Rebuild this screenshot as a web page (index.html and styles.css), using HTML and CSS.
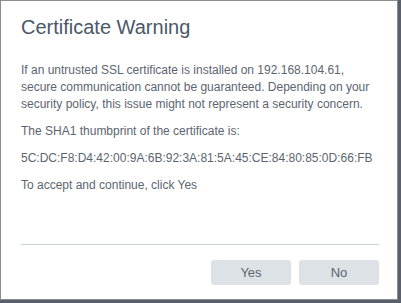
FILE: index.html
```html
<!DOCTYPE html>
<html>
<head>
<meta charset="utf-8">
<link rel="stylesheet" href="styles.css">
</head>
<body>
<div class="dialog">
  <h1 class="title">Certificate Warning</h1>
  <div class="content">
    <p class="para">If an untrusted SSL certificate is installed on 192.168.104.61, secure communication cannot be guaranteed. Depending on your security policy, this issue might not represent a security concern.</p>
    <p class="para">The SHA1 thumbprint of the certificate is:</p>
    <p class="para">5C:DC:F8:D4:42:00:9A:6B:92:3A:81:5A:45:CE:84:80:85:0D:66:FB</p>
    <p class="para">To accept and continue, click Yes</p>
  </div>
  <div class="footer">
    <div class="sep"></div>
    <div class="buttons">
      <button class="btn">Yes</button>
      <button class="btn">No</button>
    </div>
  </div>
</div>
</body>
</html>
```
FILE: styles.css
```css
html, body {
  margin: 0;
  padding: 0;
}
body {
  background: #58606b;
  width: 401px;
  height: 303px;
  overflow: hidden;
  font-family: "Liberation Sans", Arial, sans-serif;
}
.dialog {
  box-sizing: border-box;
  width: 398px;
  height: 300px;
  background: #fff;
  border: 1px solid #8c8c8c;
  display: flex;
  flex-direction: column;
}
.title {
  margin: 14px 0 0 20px;
  font-size: 20px;
  font-weight: normal;
  color: #4a5868;
  line-height: 24px;
}
.content {
  padding: 23px 20px 0 20px;
  flex: 1;
}
.para {
  margin: 0 0 10px 0;
  font-size: 12px;
  line-height: 17px;
  color: #5b6570;
}
.footer {
  padding: 0 18px 14px 20px;
}
.sep {
  height: 1px;
  background: #c9d1d1;
}
.buttons {
  display: flex;
  justify-content: flex-end;
  gap: 8px;
  margin-top: 15px;
}
.btn {
  width: 80px;
  height: 25px;
  border: none;
  border-radius: 3px;
  background: #dde2e6;
  color: #5b6570;
  font-family: "Liberation Sans", Arial, sans-serif;
  font-size: 13px;
  padding: 0;
}
```
